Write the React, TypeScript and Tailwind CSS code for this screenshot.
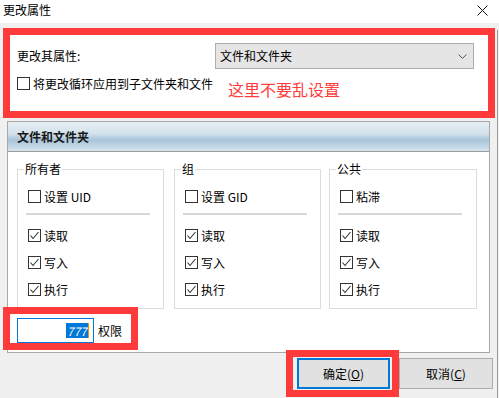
import React from "react";

const FONT = "font-['Noto_Sans_CJK_SC','Microsoft_YaHei',sans-serif]";

function Box({ checked }: { checked?: boolean }) {
  return (
    <span className="w-[13px] h-[13px] border border-[#333333] bg-white flex items-center justify-center shrink-0">
      {checked && (
        <svg width="11" height="11" viewBox="0 0 11 11">
          <polyline points="1.5,5.5 4,8.5 9.5,2" fill="none" stroke="#333333" strokeWidth="1.1" />
        </svg>
      )}
    </span>
  );
}

function CheckRow({ label, checked, className = "" }: { label: string; checked?: boolean; className?: string }) {
  return (
    <div className={`flex items-center h-[13px] pl-[10px] ${className}`}>
      <Box checked={checked} />
      <span className="ml-[3px] text-[12px] leading-[13px] text-black whitespace-nowrap">{label}</span>
    </div>
  );
}

function Group({ title, special, width, className = "" }: { title: string; special: string; width: string; className?: string }) {
  return (
    <div className={`relative h-[140px] border border-[#dcdcdc] bg-white ${width} ${className}`}>
      <span className="absolute left-[6px] -top-[9px] bg-white px-[1px] text-[12px] leading-[16px] text-black">{title}</span>
      <div className="pt-[20px]">
        <CheckRow label={special} />
        <div className="mt-[10px] ml-[8px] w-[124px] h-[2px] bg-[#d8d8d8]" />
        <CheckRow label="读取" checked className="mt-[14px]" />
        <CheckRow label="写入" checked className="mt-[14px]" />
        <CheckRow label="执行" checked className="mt-[14px]" />
      </div>
    </div>
  );
}

export default function App() {
  return (
    <div className={`relative w-[499px] h-[398px] overflow-hidden bg-[#f0f0f0] ${FONT} text-black`}>
      {/* title bar */}
      <div className="h-[23px] bg-white flex items-center justify-between pl-[3px] pr-[11px]">
        <span className="text-[12px] leading-[16px] -mt-[3px]">更改属性</span>
        <svg width="11" height="11" viewBox="0 0 11 11" className="-mt-[3px]">
          <line x1="0.5" y1="0.5" x2="10.5" y2="10.5" stroke="#111" strokeWidth="1" />
          <line x1="10.5" y1="0.5" x2="0.5" y2="10.5" stroke="#111" strokeWidth="1" />
        </svg>
      </div>

      {/* body */}
      <div className="h-[375px] w-[498px] border-r border-[#9a9a9a] pl-[7px] pr-[7px]">
        {/* top panel */}
        <div className="mt-[7px] mx-[1px] h-[83px] bg-white border border-[#d9d9d9] pl-[8px] pt-[12px]">
          <div className="flex items-center h-[26px]">
            <span className="w-[198px] text-[12px] leading-[16px]">更改其属性:</span>
            <div className="w-[259px] h-[26px] bg-[#e5e5e5] border border-[#adadad] flex items-center justify-between pl-[4px] pr-[6px]">
              <span className="text-[12px] leading-[16px]">文件和文件夹</span>
              <svg width="9" height="5" viewBox="0 0 9 5">
                <polyline points="0.5,0.5 4.5,4.3 8.5,0.5" fill="none" stroke="#555" strokeWidth="1" />
              </svg>
            </div>
          </div>
          <div className="flex items-center h-[13px] mt-[8px]">
            <Box />
            <span className="ml-[3px] text-[12px] leading-[13px] whitespace-nowrap">将更改循环应用到子文件夹和文件</span>
            <span className="ml-[15px] mt-[10px] text-[16px] leading-[20px] text-[#ff3b3b] whitespace-nowrap">这里不要乱设置</span>
          </div>
        </div>

        {/* permissions panel */}
        <div className="mt-[8px] h-[232px] bg-white border border-[#a8a8a8]">
          <div className="h-[30px] border-b border-[#9c9c9c] bg-[linear-gradient(to_bottom,#e6eef4_0%,#d3e2ec_40%,#a9c5d9_62%,#bcd3e3_80%,#d6e4ee_100%)] flex items-center pl-[9px]">
            <span className="text-[12px] leading-[16px] font-bold text-[#1a1a1a]">文件和文件夹</span>
          </div>
          <div className="pt-[17px] pl-[9px]">
            <div className="flex">
              <Group title="所有者" special="设置 UID" width="w-[147px]" />
              <Group title="组" special="设置 GID" width="w-[147px]" className="ml-[10px]" />
              <Group title="公共" special="粘滞" width="w-[148px]" className="ml-[8px]" />
            </div>
            <div className="mt-[9px] flex items-center">
              <div className="w-[77px] h-[25px] border border-[#0078d7] bg-white flex items-center justify-end pr-[4px]">
                <span className="bg-[#0078d7] text-white text-[12px] leading-[15px] italic px-[1px]">777</span>
                <span className="w-[1px] h-[15px] bg-[#ff8c00]" />
              </div>
              <span className="ml-[4px] text-[12px] leading-[16px]">权限</span>
            </div>
          </div>
        </div>

        {/* buttons */}
        <div className="mt-[5px] flex justify-end gap-[9px] pr-[-3px]">
          <button className="w-[93px] h-[31px] border-2 border-[#0078d7] bg-[#e1e1e1] text-[12px] leading-[16px] flex items-center justify-center">
            确定(<span className="underline">O</span>)
          </button>
          <button className="w-[94px] h-[31px] border border-[#adadad] bg-[#e1e1e1] text-[12px] leading-[16px] flex items-center justify-center mr-[-3px]">
            取消(<span className="underline">C</span>)
          </button>
        </div>
      </div>

      {/* red annotation boxes */}
      <div className="absolute left-[3px] top-[28px] w-[492px] h-[90px] border-[7px] border-[#ff3a3a] pointer-events-none" />
      <div className="absolute left-[3px] top-[307px] w-[135px] h-[43px] border-[7px] border-[#ff3a3a] pointer-events-none" />
      <div className="absolute left-[286px] top-[350px] w-[113px] h-[47px] border-[7px] border-[#ff3a3a] pointer-events-none" />
    </div>
  );
}
